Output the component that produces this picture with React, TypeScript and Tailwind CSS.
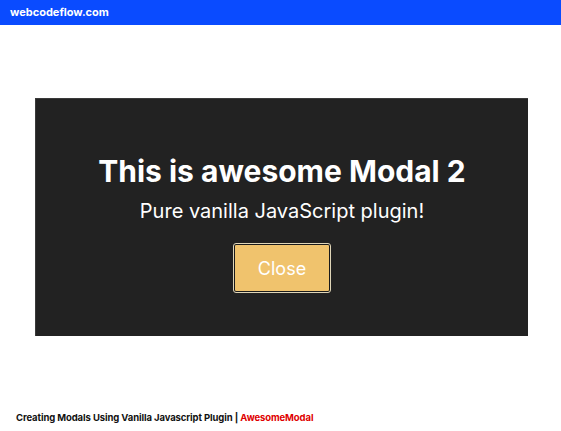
export default function App() {
    return (
        <div className="w-[561px] h-[431px] bg-white flex flex-col font-['Inter',sans-serif]">
            <div className="h-[25px] bg-[#0a4bff] flex items-center px-[10px]">
                <span className="text-white text-[11px] font-bold">webcodeflow.com</span>
            </div>

            <div className="flex-1 flex flex-col">
                <div className="mt-[73px] ml-[35px] w-[493px] h-[238px] bg-[#222222] border-t border-l border-[#3a3a3a] flex flex-col items-center">
                    <h1 className="mt-[54px] text-white text-[30px] font-bold leading-[36px]">
                        This is awesome Modal 2
                    </h1>
                    <p className="mt-[9px] text-white text-[20px] leading-[26px]">Pure vanilla JavaScript plugin!</p>
                    <button className="mt-[20px] w-[96px] h-[48px] bg-[#f0c36d] text-white text-[18px] rounded-[2px] border border-[#1a1a1a] outline outline-1 outline-[#e0d6b8]">
                        Close
                    </button>
                </div>

                <div className="mt-auto mb-[6px] px-[16px] text-[9.5px] font-bold tracking-[-0.1px]">
                    <span className="text-[#111]">Creating Modals Using Vanilla Javascript Plugin | </span>
                    <span className="text-[#e00000]">AwesomeModal</span>
                </div>
            </div>
        </div>
    );
}
